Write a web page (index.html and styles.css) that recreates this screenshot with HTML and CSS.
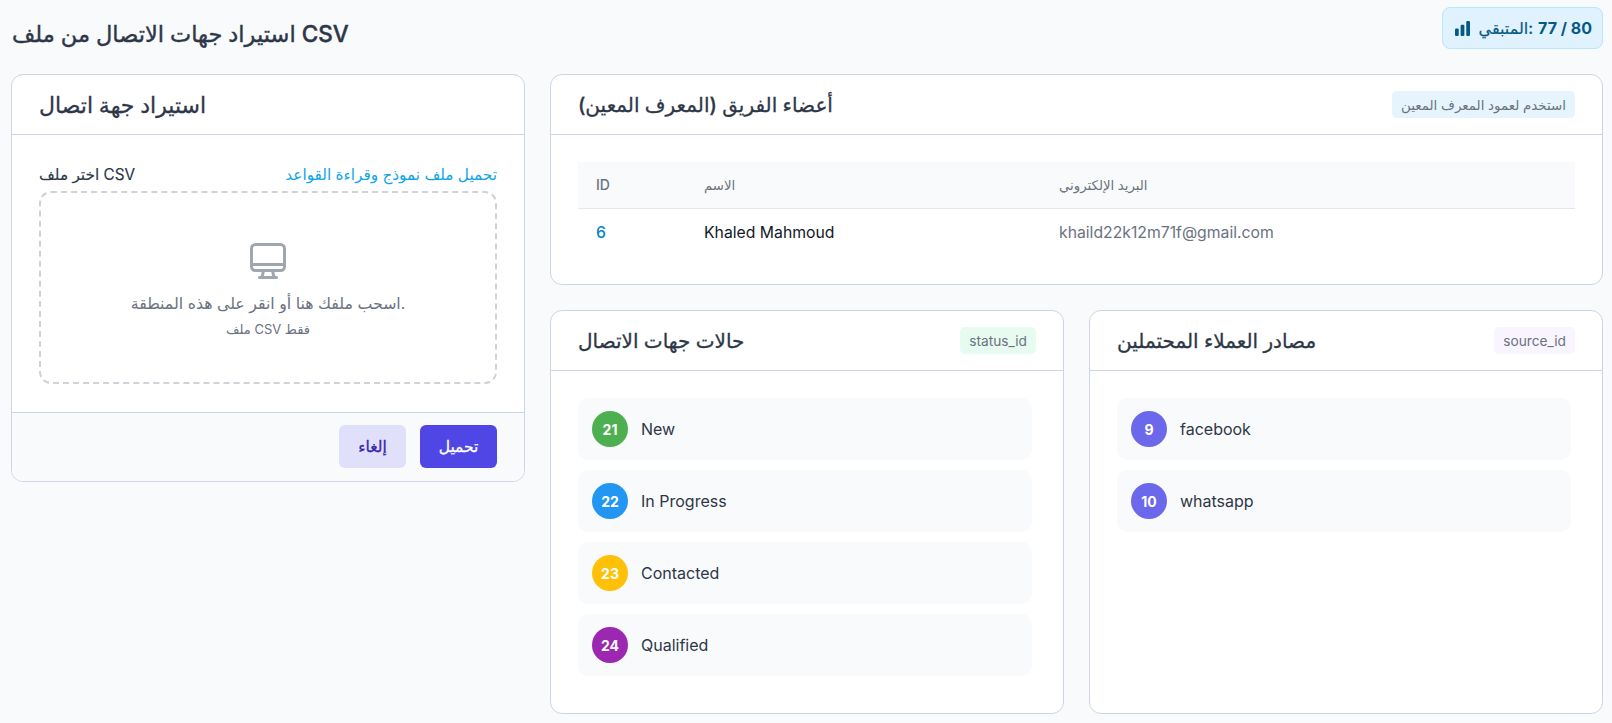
FILE: index.html
```html
<!DOCTYPE html>
<html lang="ar">
  <head>
    <meta charset="utf-8">
    <title>استيراد جهات الاتصال من ملف CSV</title>
    <link rel="stylesheet" href="styles.css">
  </head>
  <body>
    <div class="topbar">
      <h1 class="page-title">استيراد جهات الاتصال من ملف CSV</h1>
      <div class="quota">
        <svg class="quota-icon" viewBox="0 0 16 16"><rect x="0" y="8" width="4" height="8" rx="1.200"/><rect x="6" y="4" width="4" height="12" rx="1.200"/><rect x="12" y="0" width="4" height="16" rx="1.200"/></svg>
        <span>المتبقي:</span>
        <strong>77 / 80</strong>
      </div>
    </div>

    <div class="layout">
      <div class="card">
        <div class="card-header">
          <h2 class="big-title">استيراد جهة اتصال</h2>
        </div>
        <div class="card-body">
          <div class="file-label">
            <span>اختر ملف CSV</span>
            <a href="#">تحميل ملف نموذج وقراءة القواعد</a>
          </div>
          <div class="dropzone">
            <svg class="drop-icon" viewBox="0 0 36 36"><rect x="1.500" y="1.500" width="33" height="26" rx="4"/><path d="M1.500 21.500h33"/><path d="M13.500 28l-1.500 6M22.500 28l1.500 6M9.500 34.500h17"/></svg>
            <p class="drop-text">اسحب ملفك هنا أو انقر على هذه المنطقة.</p>
            <p class="drop-hint">ملف CSV فقط</p>
          </div>
        </div>
        <div class="card-footer">
          <button class="btn btn-primary">تحميل</button>
          <button class="btn btn-light">إلغاء</button>
        </div>
      </div>

      <div class="right-col">
        <div class="card">
          <div class="card-header">
            <h2>أعضاء الفريق (المعرف المعين)</h2>
            <span class="tag tag-blue">استخدم لعمود المعرف المعين</span>
          </div>
          <div class="card-body table-body">
            <table>
              <thead>
                <tr><th class="col-id">ID</th><th class="col-name">الاسم</th><th>البريد الإلكتروني</th></tr>
              </thead>
              <tbody>
                <tr><td class="cell-id">6</td><td class="cell-name">Khaled Mahmoud</td><td class="cell-email">khaild22k12m71f@gmail.com</td></tr>
              </tbody>
            </table>
          </div>
        </div>

        <div class="two-cols">
          <div class="card">
            <div class="card-header">
              <h2>حالات جهات الاتصال</h2>
              <span class="tag tag-green">status_id</span>
            </div>
            <div class="card-body list-body">
              <div class="item"><span class="num green">21</span><span>New</span></div>
              <div class="item"><span class="num blue">22</span><span>In Progress</span></div>
              <div class="item"><span class="num yellow">23</span><span>Contacted</span></div>
              <div class="item"><span class="num purple">24</span><span>Qualified</span></div>
            </div>
          </div>
          <div class="card">
            <div class="card-header">
              <h2>مصادر العملاء المحتملين</h2>
              <span class="tag tag-violet">source_id</span>
            </div>
            <div class="card-body list-body">
              <div class="item"><span class="num indigo">9</span><span>facebook</span></div>
              <div class="item"><span class="num indigo">10</span><span>whatsapp</span></div>
            </div>
          </div>
        </div>
      </div>
    </div>
  </body>
</html>
```

FILE: styles.css
```css
* {
  box-sizing: border-box;
}

body {
  margin: 0;
  padding: 7px 9px 9px 11px;
  background-color: #f8fafc;
  color: #2d3748;
  font-family: Inter, "DejaVu Sans", sans-serif;
  font-size: 16px;
}

h1, h2, p {
  margin: 0;
}

.topbar {
  display: flex;
  justify-content: space-between;
  align-items: center;
  height: 42px;
  margin-bottom: 25px;
}

.page-title {
  margin-top: 10px;
  margin-left: 1px;
  font-size: 22.5px;
  font-weight: 500;
  -webkit-text-stroke: 0.4px #2d3748;
  color: #2d3748;
}

.quota {
  display: flex;
  align-items: center;
  gap: 5px;
  height: 42px;
  padding: 0 10px 0 12px;
  background-color: #e0f2fe;
  border: 1px solid #bae6fd;
  border-radius: 8px;
  color: #075985;
  font-size: 16px;
}

.quota span {
  font-weight: 500;
  -webkit-text-stroke: 0.2px #075985;
}

.quota strong {
  font-weight: 700;
}

.quota-icon {
  width: 15px;
  height: 15px;
  margin-right: 4px;
  fill: #075985;
}

.layout {
  display: grid;
  grid-template-columns: 514px 1fr;
  gap: 25px;
  align-items: start;
}

.right-col {
  display: flex;
  flex-direction: column;
  gap: 25px;
}

.two-cols {
  display: grid;
  grid-template-columns: 1fr 1fr;
  gap: 25px;
}

.card {
  background-color: white;
  border: 1px solid #cdd5e4;
  border-radius: 12px;
  overflow: hidden;
}

.card-header {
  display: flex;
  justify-content: space-between;
  align-items: center;
  height: 60px;
  padding: 0 27px;
  border-bottom: 1px solid #cdd5e4;
}

.card-header h2 {
  font-size: 20px;
  font-weight: 500;
  -webkit-text-stroke: 0.3px #2d3748;
  color: #2d3748;
}

.card-header h2.big-title {
  font-size: 22px;
}

.card-body {
  padding: 27px 27px 28px;
}

.file-label {
  display: flex;
  justify-content: space-between;
  align-items: center;
  height: 22px;
  margin-top: 1px;
  margin-bottom: 6px;
  font-size: 15.3px;
}

.file-label span {
  -webkit-text-stroke: 0.15px #2d3748;
}

.file-label a {
  color: #0ea5e9;
  text-decoration: none;
}

.dropzone {
  display: flex;
  flex-direction: column;
  align-items: center;
  justify-content: center;
  height: 193px;
  padding-top: 4px;
  border: 2px dashed #cfd2d8;
  border-radius: 12px;
  color: #6b7280;
}

.drop-icon {
  width: 36px;
  height: 36px;
  margin-bottom: 15px;
  fill: none;
  stroke: #a0a6b0;
  stroke-width: 3;
  stroke-linecap: round;
  stroke-linejoin: round;
}

.drop-text {
  font-size: 15.8px;
  margin-bottom: 8px;
}

.drop-hint {
  font-size: 13px;
}

.card-footer {
  display: flex;
  gap: 14px;
  flex-direction: row-reverse;
  height: 69px;
  padding: 12px 27px;
  background-color: #f9fafb;
  border-top: 1px solid #cdd5e4;
}

.btn {
  height: 43px;
  border: 0;
  border-radius: 6px;
  font-family: inherit;
  font-size: 15.5px;
  font-weight: 500;
}

.btn-primary {
  width: 77px;
  background-color: #4f46e5;
  color: white;
  -webkit-text-stroke: 0.3px white;
}

.btn-light {
  width: 67px;
  background-color: #e0e0fa;
  color: #3525b0;
  -webkit-text-stroke: 0.3px #3525b0;
}

.tag {
  display: flex;
  align-items: center;
  height: 27px;
  padding: 0 9px;
  border-radius: 5px;
  font-size: 13.7px;
  color: #6b7280;
}

.tag-blue {
  background-color: #e6f5fd;
  font-size: 13.4px;
}

.tag-green {
  background-color: #e8fbf0;
}

.tag-violet {
  background-color: #f9f5fe;
}

table {
  width: 100%;
  border-collapse: collapse;
  table-layout: fixed;
}

th {
  height: 46px;
  padding: 0 18px;
  background-color: #f9fafb;
  border-bottom: 1px solid #e5e7eb;
  text-align: left;
  font-size: 13.3px;
  font-weight: 500;
  color: #6b7280;
}

.col-id {
  width: 108px;
  font-size: 14px;
}

.col-name {
  width: 355px;
}

td {
  height: 48px;
  padding: 0 18px;
  font-size: 15.75px;
}

.cell-id {
  color: #0284c7;
  font-weight: 500;
}

.cell-name {
  color: #111827;
}

.cell-email {
  color: #6b7280;
}

.list-body {
  height: 342px;
  padding-left: 27px;
  padding-right: 31px;
  padding-bottom: 0;
}

.item {
  display: flex;
  align-items: center;
  gap: 13px;
  height: 62px;
  margin-bottom: 10px;
  padding: 0 14px;
  background-color: #f9fafb;
  border-radius: 10px;
  color: #2d3748;
}

.num {
  display: flex;
  align-items: center;
  justify-content: center;
  width: 36px;
  height: 36px;
  border-radius: 50%;
  color: white;
  font-size: 14px;
  font-weight: 700;
}

.green { background-color: #4caf50; }
.blue { background-color: #2196f3; }
.yellow { background-color: #ffc107; }
.purple { background-color: #9c27b0; }
.indigo { background-color: #6c68ec; }
```
